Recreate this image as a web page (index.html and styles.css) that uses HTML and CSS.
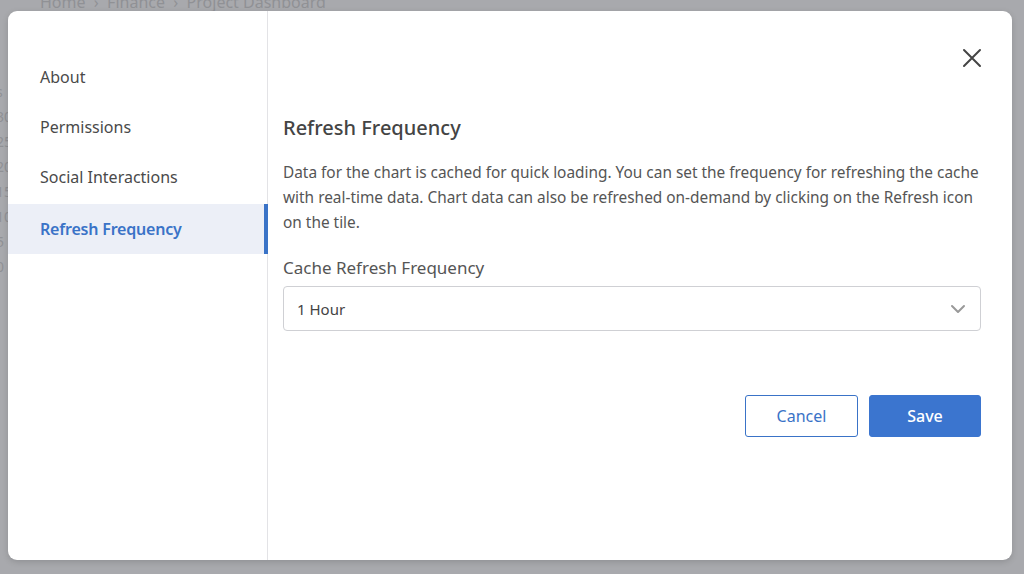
FILE: index.html
```html
<!DOCTYPE html>
<html>
<head>
<meta charset="utf-8">
<link rel="stylesheet" href="styles.css">
</head>
<body>
<div class="backdrop">
  <div class="bg-crumb">Home &nbsp;›&nbsp; Finance &nbsp;›&nbsp; Project Dashboard</div>
  <div class="bg-axis">
    <span>s</span><span>30</span><span>25</span><span>20</span><span>15</span><span>10</span><span>5</span><span>0</span>
  </div>
</div>
<div class="modal">
  <nav class="nav">
    <div class="nav-item">About</div>
    <div class="nav-item">Permissions</div>
    <div class="nav-item">Social Interactions</div>
    <div class="nav-item active">Refresh Frequency</div>
  </nav>
  <section class="content">
    <div class="top">
      <button class="close" aria-label="Close">
        <svg width="20" height="20" viewBox="0 0 20 20"><path d="M2 2 L18 18 M18 2 L2 18" stroke="#444" stroke-width="2" stroke-linecap="round" fill="none"/></svg>
      </button>
    </div>
    <h2 class="title">Refresh Frequency</h2>
    <p class="desc">Data for the chart is cached for quick loading. You can set the frequency for refreshing the cache with real-time data. Chart data can also be refreshed on-demand by clicking on the Refresh icon on the tile.</p>
    <label class="label">Cache Refresh Frequency</label>
    <div class="select">
      <span>1 Hour</span>
      <svg width="16" height="10" viewBox="0 0 16 10"><path d="M2 2 L8 8 L14 2" stroke="#999" stroke-width="2" stroke-linecap="round" stroke-linejoin="round" fill="none"/></svg>
    </div>
    <div class="actions">
      <button class="btn cancel">Cancel</button>
      <button class="btn save">Save</button>
    </div>
  </section>
</div>
</body>
</html>
```
FILE: styles.css
```css
* { box-sizing: border-box; }
html, body { margin: 0; padding: 0; }
body {
  width: 1024px;
  height: 574px;
  background: #a8a9ad;
  font-family: "Source Sans Pro", "Noto Sans", "Open Sans", sans-serif;
  position: relative;
  overflow: hidden;
  padding: 11px 12px 14px 8px;
}
.backdrop {
  position: absolute;
  inset: 0;
  color: #909195;
  font-size: 15px;
  pointer-events: none;
}
.bg-crumb {
  position: absolute;
  top: -9px;
  left: 40px;
  font-size: 16px;
}
.bg-axis {
  position: absolute;
  left: -4px;
  top: 82px;
  display: flex;
  flex-direction: column;
  gap: 6px;
  font-size: 14px;
}
.modal {
  position: relative;
  height: 549px;
  width: 1004px;
  background: #fff;
  border-radius: 9px;
  display: flex;
  overflow: hidden;
  box-shadow: 0 2px 6px rgba(0,0,0,0.15);
}
.nav {
  width: 260px;
  border-right: 1px solid #e3e3e6;
  padding-top: 41px;
  display: flex;
  flex-direction: column;
}
.nav-item {
  height: 50px;
  display: flex;
  align-items: center;
  padding-left: 32px;
  font-size: 16px;
  color: #4a4a4a;
}
.nav-item.active {
  background: #eceff7;
  color: #3a73c7;
  font-weight: 600;
  border-right: 4px solid #3a73c7;
  margin-right: -1px;
  margin-top: 2px;
  letter-spacing: -0.2px;
}
.content {
  flex: 1;
  padding: 0 31px 0 15px;
  display: flex;
  flex-direction: column;
}
.top {
  display: flex;
  justify-content: flex-end;
  padding-top: 37px;
  margin-right: -1px;
}
.close {
  background: none;
  border: 0;
  padding: 0;
  width: 20px;
  height: 20px;
  display: flex;
}
.title {
  margin: 48px 0 0;
  font-size: 20px;
  font-weight: 500;
  color: #444;
  line-height: 24px;
}
.desc {
  margin: 20px 0 0;
  font-size: 15.4px;
  line-height: 25px;
  color: #555;
}
.label {
  margin-top: 22px;
  font-size: 17px;
  color: #555;
  line-height: 22px;
}
.select {
  margin-top: 7px;
  height: 45px;
  border: 1px solid #cfd0d4;
  border-radius: 4px;
  display: flex;
  align-items: center;
  justify-content: space-between;
  padding: 0 14px 0 13px;
  font-size: 15px;
  color: #444;
}
.actions {
  margin-top: 64px;
  display: flex;
  justify-content: flex-end;
  gap: 11px;
}
.btn {
  height: 42px;
  width: 113px;
  border-radius: 3px;
  font-family: inherit;
  font-size: 16px;
}
.cancel {
  background: #fff;
  border: 1px solid #3a73c7;
  color: #3a73c7;
}
.save {
  width: 112px;
  background: #3b75cf;
  border: 1px solid #3b75cf;
  color: #fff;
  font-weight: 500;
}
```
